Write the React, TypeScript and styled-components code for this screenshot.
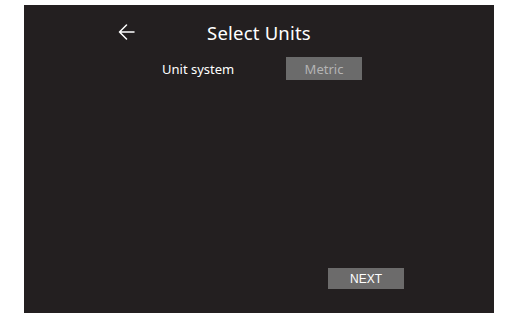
import React from "react";
import styled, { createGlobalStyle } from "styled-components";

const Global = createGlobalStyle`
  html, body { margin: 0; padding: 0; background: #ffffff; }
  body { font-family: "Noto Sans", "Open Sans", sans-serif; }
`;

const Page = styled.div`
  width: 513px;
  height: 323px;
  box-sizing: border-box;
  padding: 5px 19px 10px 24px;
  background: #ffffff;
`;

const Panel = styled.main`
  width: 470px;
  height: 308px;
  background: #231f20;
  display: flex;
  flex-direction: column;
  color: #ffffff;
`;

const Header = styled.header`
  display: grid;
  grid-template-columns: 1fr auto 1fr;
  align-items: center;
  height: 54px;
`;

const BackButton = styled.button`
  justify-self: end;
  margin-right: 72px;
  width: 18px;
  height: 18px;
  padding: 0;
  border: 0;
  background: transparent;
  color: #ffffff;
  display: flex;
  align-items: center;
  justify-content: center;
`;

const Title = styled.h1`
  margin: 0;
  font-size: 18.5px;
  font-weight: 400;
  letter-spacing: 0.2px;
`;

const Row = styled.div`
  display: flex;
  align-items: center;
  gap: 54px;
  padding-left: 138px;
  margin-top: -2px;
`;

const Label = styled.span`
  font-size: 13px;
  color: #ffffff;
  width: 70px;
  white-space: nowrap;
`;

const Select = styled.button`
  width: 76px;
  height: 23px;
  padding: 0;
  border: 0;
  background: #6b6b6b;
  color: #b4b4b4;
  font-family: "Noto Sans", sans-serif;
  font-size: 13px;
`;

const Spacer = styled.div`
  flex: 1;
`;

const Footer = styled.footer`
  display: flex;
  padding-left: 304px;
  padding-bottom: 24px;
`;

const NextButton = styled.button`
  width: 76px;
  height: 21px;
  padding: 0;
  border: 0;
  background: #6c6b6b;
  color: #ffffff;
  font-family: "Liberation Sans", Arial, sans-serif;
  font-size: 12px;
`;

export default function App() {
  return (
    <>
      <Global />
      <Page>
        <Panel>
          <Header>
            <BackButton aria-label="Back">
              <svg width="17" height="16" viewBox="0 0 17 16" fill="none">
                <path d="M16 8H1.5M8.5 1L1.5 8L8.5 15" stroke="#ffffff" strokeWidth="1.5" strokeLinecap="round" strokeLinejoin="round" />
              </svg>
            </BackButton>
            <Title>Select Units</Title>
            <div />
          </Header>
          <Row>
            <Label>Unit system</Label>
            <Select>Metric</Select>
          </Row>
          <Spacer />
          <Footer>
            <NextButton>NEXT</NextButton>
          </Footer>
        </Panel>
      </Page>
    </>
  );
}
